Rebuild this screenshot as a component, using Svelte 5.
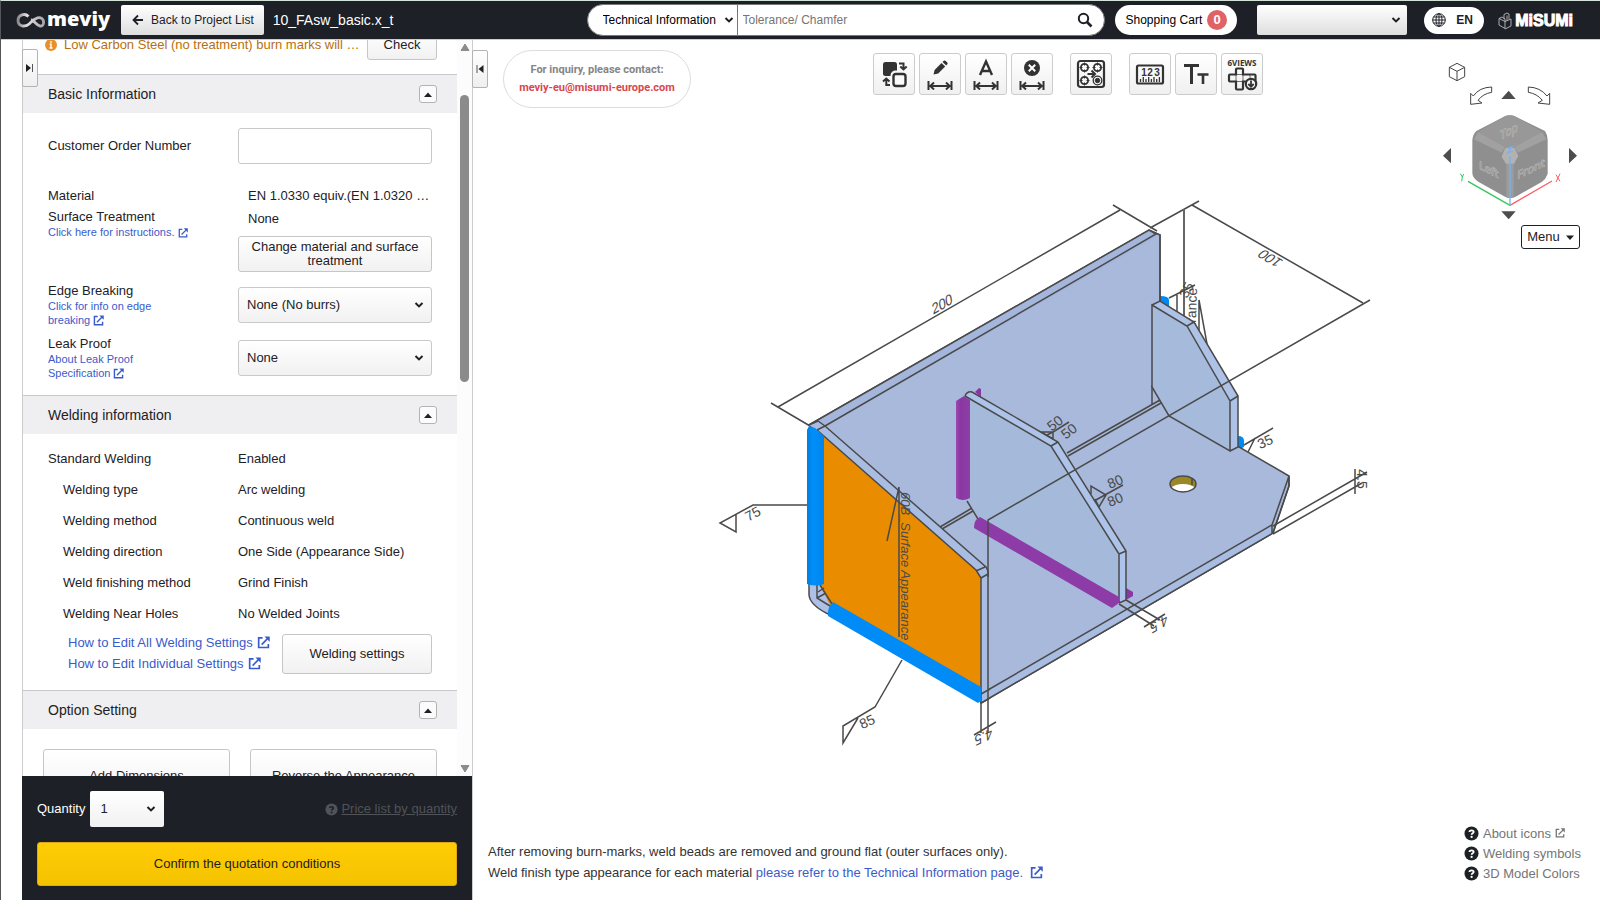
<script>
  const weldRows = [
    ['Welding type', 'Arc welding'],
    ['Welding method', 'Continuous weld'],
    ['Welding direction', 'One Side (Appearance Side)'],
    ['Weld finishing method', 'Grind Finish'],
    ['Welding Near Holes', 'No Welded Joints']
  ];
  let quantity = $state('1');
</script>

{#snippet ext(size)}
  <svg class="ext" width={size} height={size} viewBox="0 0 14 14" aria-hidden="true">
    <path d="M6 2H1.8v10.4h10.4V8.6" fill="none" stroke="currentColor" stroke-width="1.8" />
    <path d="M5 9.2 11.6 2.6" stroke="currentColor" stroke-width="1.8" />
    <path d="M8 .5h5.7v5.7z" fill="currentColor" />
  </svg>
{/snippet}

{#snippet chevron()}
  <svg class="chev" width="10" height="8" viewBox="0 0 10 8" aria-hidden="true">
    <path d="M1.5 2 5 5.4 8.500 2" fill="none" stroke="#1d2126" stroke-width="2" />
  </svg>
{/snippet}

{#snippet question(size)}
  <svg width={size} height={size} viewBox="0 0 16 16" aria-hidden="true">
    <circle cx="8" cy="8" r="7.500" fill="currentColor" />
    <path d="M5.800 6.300C5.800 4 10.300 4 10.300 6.300 10.300 7.700 8.100 7.700 8.100 9.200" fill="none" stroke="var(--mark)" stroke-width="1.900" />
    <circle cx="8.100" cy="11.600" r="1.200" fill="var(--mark)" />
  </svg>
{/snippet}

{#snippet sectionHead(title)}
  <header class="sec-head">
    <h2>{title}</h2>
    <button class="collapse" aria-label="Collapse {title}">
      <svg width="8" height="5" viewBox="0 0 8 5"><path d="M0 5 4 0.500 8 5z" fill="#1d2126" /></svg>
    </button>
  </header>
{/snippet}

{#snippet spanIcon()}
  <path d="M4.500 23v10M27.500 23v10M6 28h20M10 24.500 6.300 28l3.700 3.500M22 24.500l3.700 3.500-3.700 3.500" fill="none" stroke="#333" stroke-width="2" />
{/snippet}

<div class="app">
  <div class="topbar">
    <a class="meviy" href="#home" aria-label="meviy home">
      <svg width="30" height="17" viewBox="0 0 30 17" aria-hidden="true">
        <defs>
          <linearGradient id="loop" x1="0" x2="1"><stop offset="0" stop-color="#8f8a8e" /><stop offset=".35" stop-color="#e6e2e4" /><stop offset="1" stop-color="#a8a4a8" /></linearGradient>
        </defs>
        <path d="M12.500 4.500C9 .8 2 2.500 2 8.500c0 6 7 7 11.500 3.200C17 8.700 20 4.500 24.500 5.800c4.500 1.700 4 8.700-.5 8.200-3.500-.5-5-5-9-6.500" fill="none" stroke="url(#loop)" stroke-width="2.800" />
      </svg>
      <span>meviy</span>
    </a>
    <button class="back">
      <svg width="12" height="12" viewBox="0 0 12 12" aria-hidden="true"><path d="M11 6H2M6 1.500 1.500 6 6 10.500" fill="none" stroke="#1d2126" stroke-width="1.800" /></svg>
      Back to Project List
    </button>
    <span class="file">10_FAsw_basic.x_t</span>
    <form class="search" role="search">
      <div class="pick">
        <select aria-label="Search category"><option>Technical Information</option></select>
        {@render chevron()}
      </div>
      <input type="text" aria-label="Search" placeholder="Tolerance/ Chamfer" />
      <button type="button" aria-label="Run search">
        <svg width="16" height="16" viewBox="0 0 16 16"><circle cx="6.500" cy="6.500" r="4.700" fill="none" stroke="#1d2126" stroke-width="2" /><path d="M10 10l4.500 4.500" stroke="#1d2126" stroke-width="2.600" /></svg>
      </button>
    </form>
    <button class="cart">Shopping Cart <b>0</b></button>
    <div class="account">
      <select aria-label="Account"><option></option></select>
      {@render chevron()}
    </div>
    <button class="lang">
      <svg width="14" height="14" viewBox="0 0 14 14" fill="none" stroke="#1d2126" aria-hidden="true">
        <circle cx="7" cy="7" r="6.300" /><ellipse cx="7" cy="7" rx="3" ry="6.300" /><path d="M7 .7v12.600M.7 7h12.600M1.500 4h11M1.500 10h11" />
      </svg>
      EN
    </button>
    <a class="misumi" href="#misumi">
      <svg width="14" height="18" viewBox="0 0 14 18" fill="none" stroke="#bbb" stroke-width=".9" aria-hidden="true">
        <path d="M1 6.500 4 5l3 2v9.500L1 13zM7 9.500 13 7v7l-6 3M1 6.500l6 3 M6 2.500 9 1l2 1v5M6 2.500V7M9 3.500v5" />
      </svg>
      <span>MiSUMi</span>
    </a>
  </div>

  <div class="body">
    <aside class="panel">
      <button class="tab" aria-label="Expand panel">
        <svg width="8" height="8" viewBox="0 0 8 8"><path d="M0 0 5 4 0 8z" fill="#1d2126" /><path d="M6.500 0v8" stroke="#555" /></svg>
      </button>
      <div class="scroll">
        <div class="content">
          <div class="notice">
            <svg width="12" height="12" viewBox="0 0 12 12" aria-hidden="true"><circle cx="6" cy="6" r="6" fill="#e8912c" /><path d="M6 2v1.700M4.700 5.300H6v3.500M4.500 9h3" stroke="#fff" stroke-width="1.400" fill="none" /></svg>
            <span>Low Carbon Steel (no treatment) burn marks will …</span>
            <button class="btn">Check</button>
          </div>

          <section>
            {@render sectionHead('Basic Information')}
            <div class="basic">
              <div class="row order">
                <label for="order">Customer Order Number</label>
                <input id="order" type="text" />
              </div>
              <div class="row mat">
                <div class="names">
                  <span class="first">Material</span>
                  <span>Surface Treatment</span>
                  <a href="#treat">Click here for instructions.&nbsp;{@render ext(10)}</a>
                </div>
                <div class="vals">
                  <span class="plain">EN 1.0330 equiv.(EN 1.0320 …</span>
                  <span class="plain">None</span>
                  <button class="btn">Change material and surface treatment</button>
                </div>
              </div>
              <div class="row opt">
                <div class="names">
                  <label for="edge">Edge Breaking</label>
                  <a href="#edge-info">Click for info on edge breaking&nbsp;{@render ext(11)}</a>
                </div>
                <div class="pick"><select id="edge"><option>None (No burrs)</option></select>{@render chevron()}</div>
              </div>
              <div class="row opt">
                <div class="names">
                  <label for="leak">Leak Proof</label>
                  <a href="#leak-info">About Leak Proof Specification&nbsp;{@render ext(11)}</a>
                </div>
                <div class="pick"><select id="leak"><option>None</option></select>{@render chevron()}</div>
              </div>
            </div>
          </section>

          <section>
            {@render sectionHead('Welding information')}
            <dl class="weld">
              <div><dt>Standard Welding</dt><dd>Enabled</dd></div>
              {#each weldRows as [k, v]}
                <div class="sub"><dt>{k}</dt><dd>{v}</dd></div>
              {/each}
            </dl>
            <div class="weld-foot">
              <div>
                <a href="#all">How to Edit All Welding Settings {@render ext(13)}</a>
                <a href="#each">How to Edit Individual Settings {@render ext(13)}</a>
              </div>
              <button class="btn">Welding settings</button>
            </div>
          </section>

          <section>
            {@render sectionHead('Option Setting')}
            <div class="options">
              <button class="btn">Add Dimensions</button>
              <button class="btn">Reverse the Appearance</button>
            </div>
          </section>
        </div>
        <div class="bar" aria-hidden="true">
          <svg width="10" height="8" viewBox="0 0 10 8"><path d="M1 7.500 5 1l4 6.500z" fill="#8b8b8b" stroke="#8b8b8b" /></svg>
          <i></i>
          <svg width="10" height="8" viewBox="0 0 10 8"><path d="M1 .5 5 7 9 .5z" fill="#8b8b8b" stroke="#8b8b8b" /></svg>
        </div>
      </div>
      <footer class="quote">
        <div class="qty">
          <label for="qty">Quantity</label>
          <div class="pick">
            <select id="qty" bind:value={quantity}><option>1</option><option>2</option><option>3</option></select>
            {@render chevron()}
          </div>
          <a href="#prices">{@render question(13)}<span>Price list by quantity</span></a>
        </div>
        <button class="confirm">Confirm the quotation conditions</button>
      </footer>
    </aside>

    <main>
      <button class="tab" aria-label="Collapse panel">
        <svg width="8" height="8" viewBox="0 0 8 8"><path d="M7.500 0 2.500 4l5 4z" fill="#1d2126" /><path d="M1 0v8" stroke="#555" /></svg>
      </button>
      <div class="tools">
        <p class="inquiry">For inquiry, please contact:<br /><a href="mailto:meviy-eu@misumi-europe.com">meviy-eu@misumi-europe.com</a></p>
        <div class="icons">
          <button aria-label="Swap faces">
            <svg viewBox="0 0 32 32"><rect x="5" y="4" width="14" height="14" rx="2.500" fill="#333" /><rect x="15" y="15" width="13" height="13" rx="2.500" fill="#fff" stroke="#f8f8f8" stroke-width="5" /><rect x="15.500" y="16" width="12" height="12" rx="2.500" fill="#fafafa" stroke="#333" stroke-width="2.400" /><path d="M21 5.500h4.500V11M22.300 8.500l3.200 3 3.200-3M12 27H8.300v-6M5 23.500l3.300-3 3.200 3" fill="none" stroke="#333" stroke-width="2" /></svg>
          </button>
          <button aria-label="Edit dimension">
            <svg viewBox="0 0 32 32"><path d="M9.500 16.500 10.600 12 17.500 5l3.700 3.500-7 7zM18.500 4l1.300-1.200q1-.8 2 .1l1.500 1.500q.8 1 0 1.900L22.200 7.500z" fill="#333" />{@render spanIcon()}</svg>
          </button>
          <button aria-label="Dimension text">
            <svg viewBox="0 0 32 32"><path d="M10 17 16 3.500 22 17M12 13h8" fill="none" stroke="#333" stroke-width="2.400" />{@render spanIcon()}</svg>
          </button>
          <button aria-label="Delete dimension">
            <svg viewBox="0 0 32 32"><circle cx="16" cy="10" r="8" fill="#333" /><path d="M12.800 6.800l6.400 6.400M19.200 6.800l-6.400 6.400" stroke="#fff" stroke-width="2" />{@render spanIcon()}</svg>
          </button>
          <button class="gap" aria-label="Hole group">
            <svg viewBox="0 0 32 32" fill="none" stroke="#333"><rect x="3" y="3" width="26" height="26" rx="2.500" stroke-width="2.200" /><g stroke-width="1.800"><circle cx="9.500" cy="9.500" r="3.600" /><circle cx="22.500" cy="9.500" r="3.600" /><circle cx="9.500" cy="22.500" r="3.600" /></g><path d="M9.500 4.500v3M9.500 11.500v3M4.500 9.500h3M11.500 9.500h3M22.500 4.500v3M22.500 11.500v3M17.500 9.500h3M24.500 9.500h3M9.500 17.500v3M9.500 24.500v3M4.500 22.500h3M11.500 22.500h3" /><circle cx="22.500" cy="22.500" r="4.300" stroke-width="1.300" /><circle cx="22.500" cy="22.500" r="2.200" fill="#333" /><path d="M12.500 16h7M16.500 12.500 20 16l-3.500 3.500" stroke-width="2" /></svg>
          </button>
          <button class="gap" aria-label="Measure">
            <svg viewBox="0 0 32 32"><rect x="3" y="7.500" width="26" height="18" rx="1.500" fill="none" stroke="#333" stroke-width="2.200" /><g font-size="10" font-weight="700" text-anchor="middle" fill="#333"><text x="10" y="18">1</text><text x="16" y="18">2</text><text x="23" y="18">3</text></g><path d="M6.500 24v-3M9.300 24v-5M12 24v-3M14.700 24v-5M17.400 24v-3M20 24v-5M22.700 24v-3M25.400 24v-5" stroke="#333" stroke-width="1.300" /></svg>
          </button>
          <button aria-label="Text size">
            <svg viewBox="0 0 32 32" fill="none" stroke="#333"><path d="M4 7.500h15M11.500 7v19" stroke-width="3" /><path d="M17.500 16.500h11M23 16.500V26" stroke-width="2.600" /></svg>
          </button>
          <button aria-label="Download six views" class="views">
            <span>6VIEWS</span>
            <svg viewBox="0 0 32 24" fill="none" stroke="#333" stroke-width="2.200"><path d="M10 7.500V2.500q0-1 1-1h5q1 0 1 1v5h11.500q1 0 1 1v6H17v7q0 1-1 1h-5q-1 0-1-1v-7H4q-1 0-1-1v-5q0-1 1-1z" /><path d="M10 8v6M17 8v6M10 7.500h7M10 14.500h7M24 8v4" stroke-width=".7" /><circle cx="25" cy="17" r="5.200" fill="#f8f8f8" /><path d="M25 13.500v6M22.300 17l2.700 2.700 2.700-2.700" stroke-width="1.800" /></svg>
          </button>
        </div>
      </div>

      <div class="viewer">
        <svg width="180" height="162" viewBox="60 24 540 486" aria-label="View cube">
          <g fill="#fff" stroke="#444" stroke-width="3">
            <path d="M148 52 171 40 194 52V80L171 92 148 80zM148 52l23 12 23-12M171 64v28" />
            <path d="M212 163V130l8 8q18-26 55-27v16q-26 4-41 24l12 8zM449 163V130l-8 8q-20-26-56-27v16q26 4 42 24l-13 8z" />
          </g>
          <path d="M304 147 326 122 347 147zM304 484 326 508 347 484zM153 294 129 317 153 340zM507 294 531 317 507 340z" fill="#4d4d4d" />
          <path d="M316 198Q330 194 343 198L435 243Q444 256 443 274V372Q438 387 425 396L347 440Q330 448 315 440L236 396Q218 385 217 370V270Q218 254 229 243z" fill="#8f8f8f" />
          <path d="M316 198Q330 194 343 198L426 246 343 291 315 291 234 246z" fill="#989898" />
          <path d="M234 246 315 291 306 308 222 268zM426 246 343 291 353 308 439 268z" fill="#a1a1a1" />
          <path d="M319 340h22v102q-11 4-22 0z" fill="#9c9c9c" />
          <path d="M316 293 343 293 355 318 342 341 318 341 305 320z" fill="#b2b2b2" />
          <g class="faces">
            <text transform="translate(327 256) rotate(-28) skewX(-28)">Top</text>
            <text transform="translate(266 370) skewY(26)">Left</text>
            <text transform="translate(393 368) skewY(-26)">Front</text>
          </g>
          <g fill="none" stroke-width="4"><path d="M204 394 330 466" stroke="#35c65c" /><path d="M330 466 456 393" stroke="#fb5e63" /><path d="M330 466V318M324 295l12-5-12 19 14-6" stroke="#74b4f4" /><path d="M181 371l6 10 4-9M187 381l-2 13" stroke="#35c65c" stroke-width="3" /><path d="M468 374l12 20M480 371l-12 25" stroke="#fb5e63" stroke-width="3" /></g>
        </svg>
        <button class="menu">Menu <svg width="8" height="5" viewBox="0 0 8 5"><path d="M0 .5h8L4 5z" fill="#1d2126" /></svg></button>
      </div>

      <svg class="model" width="701" height="570" viewBox="686 190 701 570" role="img" aria-label="Sheet metal bracket with weld annotations">
        <defs>
          <linearGradient id="wl" x1="0" x2="1"><stop offset="0" stop-color="#007fe0" /><stop offset=".35" stop-color="#008ffb" /><stop offset="1" stop-color="#0084ea" /></linearGradient>
          <linearGradient id="pl" x1="0" x2="1"><stop offset="0" stop-color="#9a49b0" /><stop offset=".3" stop-color="#8a36a4" /><stop offset="1" stop-color="#8d3fa4" /></linearGradient>
        </defs>
        <!-- back annotations, partly covered by the part -->
        <g class="ln">
          <path d="M1150 228 1199 201M1192 205 1363 303M1113 205 1157 231M1120 210 778 407M771 403 810 426" />
          <path d="M1184 209V320" stroke="#666" stroke-width="2" />
          <path d="M1169 298 1195 285M1177 295V325M1199 300V340M1199 300 1207 344" />
        </g>
        <text class="note" text-anchor="end" transform="translate(1197 288) rotate(-88)">Appearance</text>
        <text class="note" transform="translate(1187 299) rotate(-62)">35</text>
        <path d="M1160 296q9 0 9 4v9h-9zM1238 436q6 0 6 5v6l-6 3z" fill="#0089f0" />
        <!-- plate and floor -->
        <path d="M809 425 1149 230 1160 235V401L1289 476V486L1273 533 981 703 981 578z" fill="#a8b9db" stroke="#4a4a4a" stroke-width="1.500" />
        <path d="M809 425 1149 230 1160 235 825 426z" fill="#a5b6dc" />
        <path d="M981 694 1272 525 1273 533 981 703z" fill="#a9bde3" />
        <g class="ln">
          <path d="M809 425 1149 230 1160 235V302M825 426 1156 234 1149 230" />
          <path d="M981 694 1272 525 1289 476V486L1273 533 981 703M1272 525v8" />
          <path d="M940 527 972 508M942 529 973 511M1067 453 1160 400M1068 456 1161 403M1152 385V404" />
          <path d="M1244 445 1273 428M1255 438 1248 452" />
        </g>
        <!-- rear rib -->
        <path d="M1152 305 1187 326 1230 401V451L1169 416 1152 387z" fill="#a6badb" />
        <path d="M1152 305 1160 301 1194 322 1238 396V447L1230 451V401L1187 326z" fill="#aec2e8" />
        <path class="ln" d="M1152 305 1187 326 1230 401V451L1169 416 1152 387zM1152 305 1160 301 1194 322 1238 396V447L1230 451M1187 326l7-4M1230 401l8-5" />
        <!-- hole -->
        <ellipse cx="1183" cy="484" rx="13" ry="8" fill="#9c8728" />
        <path d="M1171 488q4-4 12-4t12 4q-4 4-12 4t-12-4z" fill="#fff" />
        <ellipse class="ln" cx="1183" cy="484" rx="13" ry="8" />
        <path class="ln" d="M1192 479v6" />
        <!-- centre rib -->
        <path d="M975 392 979 388 981 389V397zM1126 588 1133 592V596L1126 600z" fill="#8a36a4" />
        <path d="M965 396 1051 446 1119 554V603L978 519 967 501z" fill="#a5badb" />
        <path d="M965 396 972 392 1058 442 1126 551V600L1119 603V554L1051 446z" fill="#aec3ea" />
        <path class="ln" d="M965 396 1051 446 1119 554V603M965 396Q967 391 972 392L1058 442 1126 551V600L1119 603M1051 446l7-4M1119 554l7-3M967 501 978 519" />
        <path d="M956 401 964 396 970 400V498Q963 502 956 498z" fill="url(#pl)" />
        <path d="M980 517 1119 597 1119 603 1112 608 974 528Q974 519 980 517z" fill="#8d3ba6" />
        <!-- side face -->
        <path d="M809 425 818 421 825 426 986 567Q989 571 988 577V698L981 703V578L976 570 817 430z" fill="#a9bce2" />
        <path d="M809 583V595Q810 604 828 614L834 605 824 585z" fill="#aec0e5" />
        <path d="M817 430 976 570 981 578V692L830 605 820 585z" fill="#ea8c00" />
        <g class="ln">
          <path d="M809 425 818 421 825 426 986 567Q989 571 988 577M817 430 976 570 981 578V703M817 430l8-4M976 571l9-4M981 578l7-4" />
          <path d="M981 694 990 689M981 703 990 698" />
          <path d="M809 583V595Q810 605 828 614M817 583V598L830 606M817 598 826 593M818 592 824 588M820 585 832 604" />
        </g>
        <path d="M807 430 809 426 815 428 824 436V584Q816 587 807 584z" fill="url(#wl)" />
        <path d="M833 602 981 687V701L978 703 828 616Q827 607 833 602z" fill="#008bf6" />
        <!-- front annotations -->
        <g class="ln">
          <path d="M1370 300 988 520V733M981 703V733M974 735 996 722" />
          <path d="M1273 526 1367 472M1273 534 1362 483M1355 469V494" />
          <path d="M1126 600 1160 620M1119 604 1154 626M1144 627 1165 614" />
          <path d="M1053 432 1069 422M1041 432H1053V439z M1047 435l6-3" />
          <path d="M1094 501 1123 485M1091 494V486L1106 495 1099 507 1095 499" />
          <path d="M807 505H753L720 523 736 532V514M902 660 875 707 843 726V743L858 718" />
          <path d="M899 487V637M899 487 887 541" />
        </g>
        <g class="note" text-anchor="middle">
          <text transform="translate(943 309) rotate(-30) skewX(-20)">200</text>
          <text transform="translate(1274 255) rotate(210) skewX(-20)">100</text>
          <text transform="translate(755 518) rotate(-28)">75</text>
          <text transform="translate(869 726) rotate(-24)">85</text>
          <text transform="translate(1267 446) rotate(-24)">35</text>
          <text transform="translate(1058 427) rotate(-38)">50</text>
          <text transform="translate(1072 435) rotate(-38)">50</text>
          <text transform="translate(1117 486) rotate(-22)">80</text>
          <text transform="translate(1117 504) rotate(-22)">80</text>
          <text transform="translate(983 732) rotate(155) skewX(-20)">4.5</text>
          <text transform="translate(1158 619) rotate(150) skewX(-20)">4.5</text>
          <text transform="translate(1357 479) rotate(90)">4.5</text>
        </g>
        <text class="note side" transform="translate(901 492) rotate(90)">60B_Surface Appearance</text>
      </svg>

      <div class="bottom">
        <p>After removing burn-marks, weld beads are removed and ground flat (outer surfaces only).<br />Weld finish type appearance for each material <a href="#tech">please refer to the Technical Information page. &nbsp;{@render ext(13)}</a></p>
        <nav>
          <a href="#icons">{@render question(15)}About icons {@render ext(10)}</a>
          <a href="#symbols">{@render question(15)}Welding symbols</a>
          <a href="#colors">{@render question(15)}3D Model Colors</a>
        </nav>
      </div>
    </main>
  </div>
</div>

<style>
  :global(body) { margin: 0; }
  .app {
    display: flex; flex-direction: column; height: 100vh; box-sizing: border-box;
    border-top: 1px solid #d3e3d9; border-left: 1px solid #55565a; background: #fff;
    font: 13px/16px "Liberation Sans", Arial, sans-serif; color: #1d2126; overflow: hidden;
  }
  button, input, select { font: inherit; color: inherit; margin: 0; box-sizing: border-box; }
  button { cursor: pointer; padding: 0; }
  select { appearance: none; cursor: pointer; }
  a { color: #3a5bcb; text-decoration: none; }
  p, h2, dl, dd { margin: 0; }
  .ext { vertical-align: -2px; }
  .pick, .account { position: relative; }
  .chev { position: absolute; right: 8px; top: 50%; margin-top: -4px; pointer-events: none; }

  .topbar { display: flex; align-items: center; height: 38px; flex: none; padding: 0 27px 0 15px; background: #1d2026; border-bottom: 1px solid #ccc; font-size: 12px; }
  .meviy { display: flex; align-items: center; gap: 1px; width: 105px; color: #fff; font: 800 20px/24px "Open Sans", sans-serif; }
  .meviy span { padding-bottom: 3px; }
  .back { display: flex; align-items: center; gap: 7px; height: 30px; padding: 0 10px 0 11px; border: 0; border-radius: 2px; background: linear-gradient(#fff, #dedede); white-space: nowrap; }
  .file { margin: 0 auto 0 9px; color: #fff; font-size: 14px; }
  .search { display: flex; align-items: stretch; height: 32px; flex: 0 1 518px; min-width: 0; box-sizing: border-box; border: 1px solid #777; border-radius: 16px; background: #fff; overflow: hidden; margin: 0 10px 0 16px; }
  .search .pick { width: 150px; flex: none; border-right: 1px solid #777; box-sizing: border-box; }
  .search .chev { right: 3px; }
  .search select { width: 100%; height: 100%; border: 0; padding: 0 0 0 15px; background: none; color: #000; }
  .search input { flex: 1; min-width: 0; border: 0; padding: 0 5px; outline: 0; }
  .search input::placeholder { color: #757575; }
  .search button { width: 38px; border: 0; background: none; display: grid; place-items: center; }
  .cart { display: flex; align-items: center; gap: 5px; height: 30px; padding: 0 10px 0 11px; border: 0; border-radius: 15px; background: #fff; color: #000; white-space: nowrap; }
  .cart b { width: 20px; height: 20px; border-radius: 10px; background: #e06264; color: #fff; font-size: 13px; line-height: 19px; }
  .account { width: 150px; height: 30px; margin: 0 17px 0 20px; }
  .account select { width: 100%; height: 100%; border: 0; border-radius: 2px; background: linear-gradient(#fff, #dedede); }
  .account .chev { right: 6px; }
  .lang { display: flex; align-items: center; gap: 10px; width: 60px; height: 27px; padding: 0 8px; border: 0; border-radius: 14px; background: #fff; font-weight: 700; }
  .misumi { display: flex; align-items: center; gap: 3px; margin-left: 14px; padding-top: 2px; color: #fff; font: 700 16px/20px "Liberation Sans", Arial, sans-serif; -webkit-text-stroke: 1px #fff; }

  .body { flex: 1; display: flex; min-height: 0; }
  .panel { position: relative; width: 451px; flex: none; margin-left: 21px; box-sizing: border-box; border: solid #ccc; border-width: 0 1px 0 1px; display: flex; flex-direction: column; }
  .tab { position: absolute; z-index: 1; left: -1px; top: 9px; width: 16px; height: 38px; border: 1px solid #b3b3b3; border-radius: 2px; background: linear-gradient(#fff, #efefef); display: grid; place-items: center; }
  .scroll { flex: 1; min-height: 0; display: flex; overflow: hidden; }
  .content { flex: 1; min-width: 0; margin-top: -16px; }
  .bar { width: 15px; flex: none; display: flex; flex-direction: column; align-items: center; padding: 3px 0; background: #fcfcfc; }
  .bar i { width: 9px; height: 287px; margin: 44px 0 auto; border-radius: 5px; background: #8b8b8b; }
  .btn { border: 1px solid #c6c6c9; border-radius: 3px; background: linear-gradient(#fff, #f1f1f1); }
  .notice { display: flex; align-items: center; height: 41px; padding: 0 20px 9px 22px; color: #b7700e; white-space: nowrap; }
  .notice span { margin: 0 auto 0 7px; }
  .notice .btn { width: 70px; height: 30px; color: #1d2126; }
  .sec-head { display: flex; align-items: center; justify-content: space-between; height: 38px; padding: 0 20px 0 25px; border-top: 1px solid #c8c8cc; background: #efeff1; }
  .sec-head h2 { font-size: 14px; font-weight: 400; }
  .collapse { width: 18px; height: 18px; border: 1px solid #b3b3b3; border-radius: 3px; background: #fbfbfb; display: grid; place-items: center; }
  .basic { padding: 15px 25px 15px; }
  .row { display: grid; grid-template-columns: 1fr 194px; }
  .order { align-items: center; margin-bottom: 24px; }
  .order input { height: 36px; border: 1px solid #c9c9cd; border-radius: 3px; width: 100%; }
  .mat { padding-bottom: 2px; }
  .names { display: flex; flex-direction: column; }
  .names a { font-size: 11px; line-height: 14px; }
  .names .first { margin-bottom: 5px; }
  .vals { display: flex; flex-direction: column; gap: 7px; }
  .vals .plain { padding-left: 10px; white-space: nowrap; }
  .vals .btn { height: 36px; margin-top: 2px; padding: 0 8px; line-height: 14px; }
  .opt { margin-top: 9px; }
  .opt .names { width: 120px; }
  .opt .pick { height: 36px; margin-top: 4px; }
  .opt select { width: 100%; height: 100%; padding: 0 8px; border: 1px solid #c9c9cd; border-radius: 3px; background: linear-gradient(#fff, #f1f1f1); }
  .weld { padding: 9px 25px 0; }
  .weld div { display: grid; grid-template-columns: 190px 1fr; height: 31px; align-items: center; }
  .weld .sub dt { padding-left: 15px; }
  .weld-foot { display: flex; justify-content: space-between; align-items: flex-end; padding: 3px 25px 16px 45px; }
  .weld-foot a { display: block; line-height: 21px; white-space: nowrap; }
  .weld-foot .ext { margin-left: 1px; }
  .weld-foot .btn { width: 150px; height: 40px; }
  .options { display: grid; grid-template-columns: 1fr 1fr; gap: 20px; padding: 20px; }
  .options .btn { height: 54px; }
  .quote { margin: 0 0 0 -1px; height: 124px; box-sizing: border-box; padding: 15px 15px 14px; background: #1d2026; color: #fff; display: flex; flex-direction: column; gap: 15px; }
  .qty { display: flex; align-items: center; gap: 5px; height: 36px; }
  .qty .pick { width: 74px; height: 36px; color: #1d2126; }
  .qty select { width: 100%; height: 100%; border: 0; border-radius: 2px; padding: 0 10px; background: linear-gradient(#fff, #f1f1f1); }
  .qty a { margin-left: auto; display: flex; align-items: center; gap: 3px; color: #505358; --mark: #1d2026; }
  .qty a span { text-decoration: underline; }
  .confirm { height: 44px; border: 1px solid #dfa61c; border-radius: 3px; background: linear-gradient(#ffcc05, #f4c300); color: #1d2126; }

  main { position: relative; flex: 1; min-width: 0; display: flex; flex-direction: column; color: #333; }
  main .tab { top: 10px; }
  .tools { display: flex; justify-content: space-between; align-items: flex-start; padding: 10px 337px 0 30px; }
  .inquiry { width: 188px; height: 58px; box-sizing: border-box; padding-top: 10px; border: 1px solid #ddd; border-radius: 29px; text-align: center; white-space: nowrap; font: 700 11px/18px Roboto, "Liberation Sans", sans-serif; color: #858585; }
  .inquiry a { color: #d9474d; }
  .icons { display: flex; gap: 4px; padding-top: 3px; }
  .icons button { width: 42px; height: 42px; border: 1px solid #ccc; border-radius: 3px; background: linear-gradient(#fff, #f0f0f0); display: grid; place-items: center; align-content: center; }
  .icons .gap { margin-left: 13px; }
  .icons svg { width: 32px; height: 32px; }
  .icons .views svg { height: 24px; }
  .views span { font: 700 8px/9px "Open Sans", sans-serif; }
  .viewer { position: absolute; right: 0; top: 18px; display: flex; flex-direction: column; align-items: flex-end; }
  .faces text { font: 33px "Open Sans", sans-serif; fill: #9b9b9b; stroke: #c4c4c4; stroke-width: 2; paint-order: stroke; text-anchor: middle; }
  .menu { display: flex; align-items: center; justify-content: center; gap: 6px; width: 59px; height: 24px; margin: 5px 20px 0 0; border: 1px solid #1d2126; border-radius: 3px; background: #fff; color: #1d2126; }
  .menu svg { margin-top: 1px; }
  .model { align-self: center; margin-top: 82px; flex: none; }
  .ln { fill: none; stroke: #4a4a4a; stroke-width: 1.5; }
  .note { font: 14px "Liberation Sans", Arial, sans-serif; fill: #4a4a4a; }
  .side { font-size: 13px; font-style: italic; }
  .bottom { margin-top: auto; display: flex; justify-content: space-between; align-items: flex-end; padding: 0 19px 17px 15px; line-height: 21px; }
  nav { display: flex; flex-direction: column; }
  nav a { display: flex; align-items: center; gap: 4px; height: 20px; color: #757575; --mark: #fff; }
  nav a > :global(svg:first-child) { color: #1d2126; }
</style>
